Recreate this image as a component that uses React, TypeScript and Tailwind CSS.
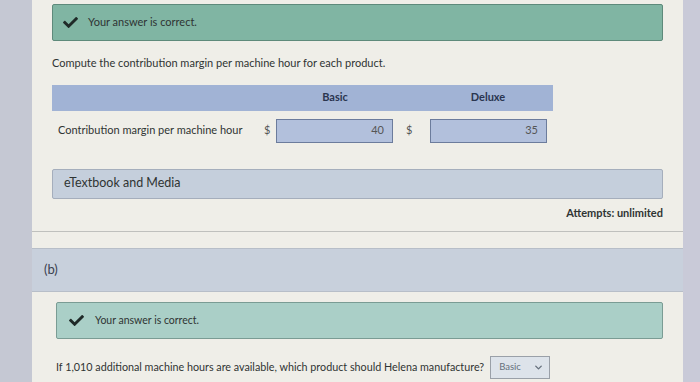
import { FaCheck } from "react-icons/fa";
import { FiChevronDown } from "react-icons/fi";

function Correct({ className }: { className: string }) {
  return (
    <div className={className}>
      <FaCheck size={15} color="#1f2a28" />
      <span>Your answer is correct.</span>
    </div>
  );
}

export default function App() {
  return (
    <div className="flex h-[382px] w-[700px] overflow-hidden bg-[#efeee8] font-['Lato',sans-serif] text-[#2f3433]">
      <div className="w-[32px] shrink-0 bg-[#c5c8d3]" />
      <div className="flex-1">
        <div className="pl-[20px] pr-[20px] pt-[4px]">
          <Correct className="flex h-[37px] items-center gap-[10px] rounded-[2px] border border-[#5e8a7b] bg-[#80b5a3] pl-[10px] text-[11px]" />
          <p className="mt-[14px] text-[11px]">Compute the contribution margin per machine hour for each product.</p>

          <div className="mt-[13px] w-[501px]">
            <div className="flex h-[26px] items-center bg-[#a1b3d5] text-[11px] font-bold text-[#2a3550]">
              <div className="w-[225px]" />
              <div className="w-[116px] text-center">Basic</div>
              <div className="w-[37px]" />
              <div className="w-[116px] text-center">Deluxe</div>
            </div>
            <div className="mt-[8px] flex h-[24px] items-center text-[11px]">
              <div className="w-[212px] pl-[6px]">Contribution margin per machine hour</div>
              <div className="w-[12px] text-[#555]">$</div>
              <div className="flex h-[24px] w-[117px] items-center justify-end border border-[#6c7c9c] bg-[#b2c0dc] pr-[8px] text-[#555]">40</div>
              <div className="w-[27px] pl-[13px] text-[#555]">$</div>
              <div className="ml-[10px] flex h-[24px] w-[117px] items-center justify-end border border-[#6c7c9c] bg-[#b2c0dc] pr-[8px] text-[#555]">35</div>
            </div>
          </div>

          <div className="mt-[26px] flex h-[30px] items-center rounded-[2px] border border-[#a5aebc] bg-[#c5cfdc] pl-[11px] text-[12.5px]">eTextbook and Media</div>
          <div className="mt-[6px] text-right text-[11px] font-bold">Attempts: unlimited</div>
        </div>
        <div className="mt-[10px] border-t border-[#bfc0bd]" />
        <div className="mt-[16px] flex h-[44px] items-center border-y border-[#b7bec8] bg-[#c8d0dc] pl-[12px] text-[13px] text-[#3a4150]">(b)</div>

        <div className="pl-[24px] pr-[20px] pt-[10px]">
          <Correct className="flex h-[37px] items-center gap-[11px] rounded-[2px] border border-[#7a9c94] bg-[#aacfc7] pl-[12px] text-[10.5px]" />
          <div className="mt-[17px] flex items-center gap-[6px] text-[10.75px]">
            <span>If 1,010 additional machine hours are available, which product should Helena manufacture?</span>
            <div className="flex h-[23px] w-[60px] items-center justify-between border border-[#9aa0a8] bg-[#dde3ea] pl-[8px] pr-[5px] text-[9.5px] text-[#66707c]">
              <span>Basic</span>
              <FiChevronDown size={11} strokeWidth={3} />
            </div>
          </div>
        </div>
      </div>
      <div className="w-[17px] shrink-0 bg-[#c9cad8]" />
    </div>
  );
}
